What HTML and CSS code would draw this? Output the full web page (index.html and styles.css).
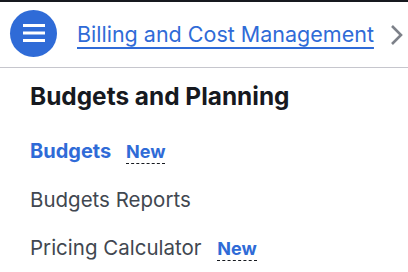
FILE: index.html
```html
<!DOCTYPE html>
<html>
<head>
<meta charset="utf-8">
<link rel="stylesheet" href="styles.css">
</head>
<body>
<div class="topline"></div>
<header class="header">
  <button class="menu-btn" aria-label="Menu">
    <svg width="22" height="19" viewBox="0 0 22 19"><rect x="0" y="0" width="22" height="3" fill="#fff"/><rect x="0" y="7.5" width="22" height="3" fill="#fff"/><rect x="0" y="15" width="22" height="3" fill="#fff"/></svg>
  </button>
  <a class="crumb" href="#">Billing and Cost Management</a>
  <svg class="chevron" width="14" height="22" viewBox="0 0 14 22"><path d="M2 2 L11 11 L2 20" fill="none" stroke="#7d8189" stroke-width="2.6"/></svg>
</header>
<nav class="nav">
  <h2 class="section-title">Budgets and Planning</h2>
  <ul class="items">
    <li class="item active">Budgets <span class="badge">New</span></li>
    <li class="item">Budgets Reports</li>
    <li class="item">Pricing Calculator <span class="badge">New</span></li>
  </ul>
</nav>
</body>
</html>
```
FILE: styles.css
```css
html, body {
  margin: 0;
  padding: 0;
  background: #fff;
  font-family: Inter, "Liberation Sans", sans-serif;
  overflow: hidden;
}
.topline {
  height: 2px;
  background: #16191f;
}
.header {
  display: flex;
  align-items: center;
  padding-left: 10px;
  border-bottom: 1px solid #c6c6cd;
  box-sizing: border-box;
  height: 66px;
}
.menu-btn {
  width: 47px;
  height: 47px;
  border-radius: 50%;
  border: none;
  background: #2f6bd7;
  display: flex;
  align-items: center;
  justify-content: center;
  padding: 0;
  align-self: flex-start;
  margin-top: 8px;
  flex: none;
}
.crumb {
  margin-left: 20px;
  color: #2f6bd7;
  font-size: 21.5px;
  line-height: 26px;
  text-decoration: underline;
  text-decoration-thickness: 2px;
  text-underline-offset: 5px;
  white-space: nowrap;
  margin-bottom: 2px;
}
.chevron {
  margin-left: 16px;
  flex: none;
}
.nav {
  padding-left: 30px;
}
.section-title {
  margin: 13px 0 0;
  font-size: 24.4px;
  line-height: 30px;
  font-weight: 700;
  color: #16191f;
}
.items {
  list-style: none;
  margin: 16px 0 0;
  padding: 0;
}
.item {
  font-size: 20.5px;
  line-height: 48px;
  color: #414750;
  white-space: nowrap;
}
.item.active {
  color: #2f6bd7;
  font-weight: 700;
  font-size: 20px;
}
.badge {
  margin-left: 10px;
  color: #2f6bd7;
  font-weight: 700;
  font-size: 18px;
  border-bottom: 1px dashed #16191f;
  padding-bottom: 1px;
}
```
